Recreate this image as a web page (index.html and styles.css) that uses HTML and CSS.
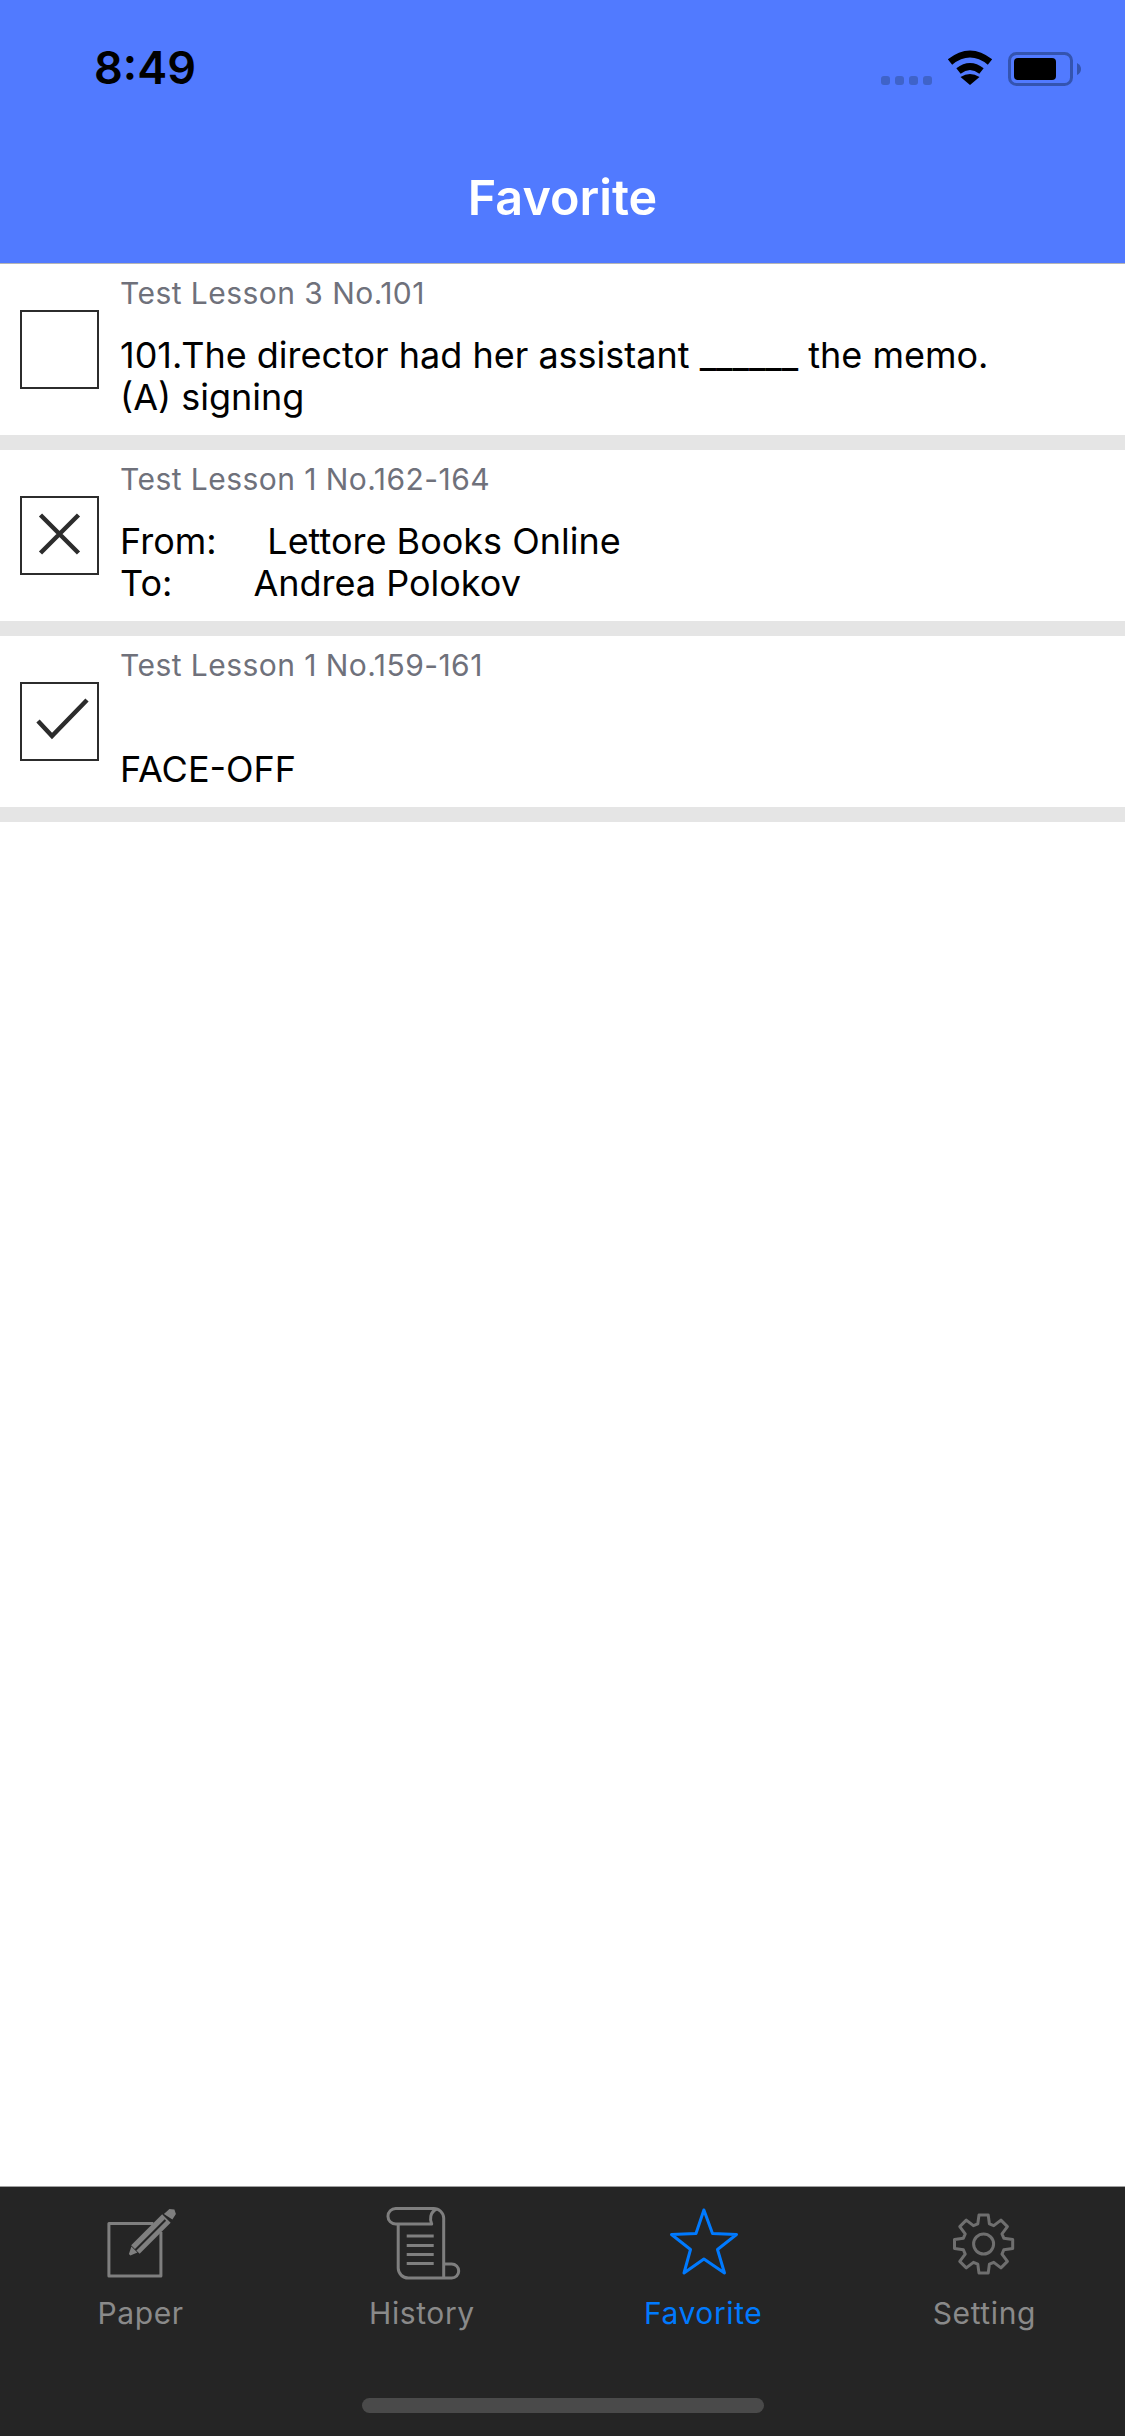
FILE: index.html
```html
<!DOCTYPE html>
<html lang="en">
<head>
<meta charset="utf-8">
<title>Favorite</title>
<link rel="stylesheet" href="styles.css">
</head>
<body>
<div class="app">
  <header class="header">
    <div class="status">
      <span class="time">8:49</span>
      <svg class="status-icons" viewBox="875 45 215 50" width="215" height="50">
        <g class="dots"><rect x="881" y="76" width="9" height="9" rx="3"/><rect x="895" y="76" width="9" height="9" rx="3"/><rect x="909" y="76" width="9" height="9" rx="3"/><rect x="923" y="76" width="9" height="9" rx="3"/></g>
        <path class="wifi-arc" d="M950 62Q970 46 990 62"/>
        <path class="wifi-arc" d="M958.500 71Q970 62 981.500 71"/>
        <path class="wifi-fill" d="M970 85L960.500 77Q970 71 979.500 77Z"/>
        <rect class="batt-frame" x="1009.500" y="53.500" width="62" height="31" rx="7"/>
        <rect class="batt-fill" x="1014" y="58" width="42" height="22" rx="4"/>
        <path class="batt-nub" d="M1077 63Q1081 65 1081 69Q1081 73 1077 75Z"/>
      </svg>
    </div>
    <h1 class="title">Favorite</h1>
  </header>

  <main class="list">
    <article class="row">
      <div class="check"></div>
      <div class="row-text">
        <div class="lesson">Test Lesson 3 No.101</div>
        <div class="body">101.The director had her assistant ______ the memo.
(A) signing</div>
      </div>
    </article>
    <article class="row">
      <div class="check">
        <svg viewBox="0 0 75 75" width="75" height="75"><path class="mark" d="M18.500 17L56.500 55M56.500 17L18.500 55"/></svg>
      </div>
      <div class="row-text">
        <div class="lesson">Test Lesson 1 No.162-164</div>
        <div class="body">From:     Lettore Books Online
To:        Andrea Polokov</div>
      </div>
    </article>
    <article class="row">
      <div class="check">
        <svg viewBox="0 0 75 75" width="75" height="75"><path class="mark" d="M16 37L30 52L65 16"/></svg>
      </div>
      <div class="row-text">
        <div class="lesson">Test Lesson 1 No.159-161</div>
        <div class="body">
FACE-OFF</div>
      </div>
    </article>
  </main>

  <nav class="tabbar">
    <div class="tabs">
      <div class="tab">
        <svg class="tab-icon" viewBox="95.600 2204 90 84" width="90" height="84">
          <path class="line" d="M153 2223.500H108.500V2276H160.500V2232"/>
          <path class="pencil" d="M135 2249.500L166 2218.500"/>
          <path class="pencil-core" d="M135 2250L165 2220"/>
          <path class="solid" d="M128.500 2254L131 2246.500L137 2252.500L130 2255.500ZM163.500 2214L169 2209L174 2209.500L175.500 2214L172 2219.500Z"/>
        </svg>
        <span class="tab-label">Paper</span>
      </div>
      <div class="tab">
        <svg class="tab-icon" viewBox="376.300 2204 90 84" width="90" height="84">
          <path class="line" d="M397.500 2224V2268A10 10 0 0 0 407.500 2278H451A7 7 0 0 0 451 2264H443V2278M443 2264V2218A10 10 0 0 0 433 2208.500H395A7.500 7.500 0 0 0 395 2224H431C429 2220 429 2212 436 2209"/>
          <path class="line" d="M406 2236H433M406 2245.500H433M406 2254.500H433M406 2263.500H433"/>
        </svg>
        <span class="tab-label">History</span>
      </div>
      <div class="tab active">
        <svg class="tab-icon" viewBox="657.500 2204 90 84" width="90" height="84">
          <path class="line" d="M703.400 2210L695.500 2233.500L671 2234.500L690 2249.500L683.500 2273L703.400 2259L724 2273L717 2249.500L736 2234.500L712 2233.500Z"/>
        </svg>
        <span class="tab-label">Favorite</span>
      </div>
      <div class="tab">
        <svg class="tab-icon" viewBox="938.400 2204 90 84" width="90" height="84">
          <g transform="translate(983 2244)">
            <path class="gear" d="M-5.800 -20.200L-4.600 -29.100L4.600 -29.100L5.800 -20.200L10.180 -18.380L17.330 -23.830L23.830 -17.330L18.380 -10.180L20.200 -5.800L29.100 -4.600L29.100 4.600L20.200 5.800L18.380 10.180L23.830 17.330L17.330 23.830L10.180 18.380L5.800 20.200L4.600 29.100L-4.600 29.100L-5.800 20.200L-10.180 18.380L-17.330 23.830L-23.830 17.330L-18.380 10.180L-20.200 5.800L-29.100 4.600L-29.100 -4.600L-20.200 -5.800L-18.380 -10.180L-23.830 -17.330L-17.330 -23.830L-10.180 -18.380Z"/>
            <circle class="gear" r="10"/>
          </g>
        </svg>
        <span class="tab-label">Setting</span>
      </div>
    </div>
    <div class="home-indicator"></div>
  </nav>
</div>
</body>
</html>
```

FILE: styles.css
```css
* { box-sizing: border-box; }
html, body { margin: 0; padding: 0; }
body { background: #fff; font-family: Inter, "Liberation Sans", sans-serif; }

.app {
  width: 1125px;
  height: 2436px;
  display: flex;
  flex-direction: column;
  overflow: hidden;
}

.header {
  height: 264px;
  background: #517aff;
  border-bottom: 1px solid #b5b5b5;
  display: flex;
  flex-direction: column;
}
.status {
  height: 168px;
  display: flex;
  align-items: flex-start;
  justify-content: space-between;
  padding: 45px 35px 0 94px;
}
.time {
  font-size: 45px;
  font-weight: 600;
  line-height: 46px;
  color: #000;
}
.status-icons { display: block; }
.dots { fill: #3f63c9; }
.wifi-arc { fill: none; stroke: #000; stroke-width: 7; }
.wifi-fill { fill: #000; }
.batt-frame { fill: none; stroke: #3454b0; stroke-width: 3; }
.batt-fill { fill: #000; }
.batt-nub { fill: #3454b0; }

.title {
  margin: 0;
  text-align: center;
  font-size: 48.500px;
  font-weight: 600;
  line-height: 60px;
  color: #fff;
}

.list { flex: 1; }

.row {
  height: 186px;
  border-bottom: 15px solid #e5e5e5;
  padding-left: 20px;
  display: flex;
  align-items: center;
  gap: 21px;
}
.check {
  width: 79px;
  height: 79px;
  border: 2px solid #2c2c2c;
  flex: none;
}
.check svg { display: block; }
.mark { fill: none; stroke: #2c2c2c; stroke-width: 4.500; }

.row-text {
  align-self: flex-start;
  padding-top: 11px;
}
.lesson {
  font-size: 30px;
  line-height: 36px;
  letter-spacing: 0.45px;
  color: #6f717b;
}
.body {
  margin-top: 23px;
  min-height: 84px;
  font-size: 36px;
  line-height: 42px;
  color: #000;
  white-space: pre-wrap;
}

.tabbar {
  height: 250px;
  background: #252525;
  border-top: 1px solid #a0a0a0;
  display: flex;
  flex-direction: column;
  align-items: center;
}
.tabs {
  width: 100%;
  display: flex;
  padding-top: 17px;
}
.tab {
  flex: 1;
  display: flex;
  flex-direction: column;
  align-items: center;
  color: #8a8a8a;
}
.tab-icon { display: block; }
.line { fill: none; stroke: #7f7f7f; stroke-width: 3; stroke-linejoin: round; }
.pencil { fill: none; stroke: #7f7f7f; stroke-width: 12; }
.pencil-core { fill: none; stroke: #252525; stroke-width: 2; }
.solid { fill: #7f7f7f; }
.gear { fill: none; stroke: #6f6f6f; stroke-width: 3; stroke-linejoin: round; }
.tab.active { color: #007aff; }
.tab.active .line { stroke: #007aff; }
.tab-label {
  margin-top: 7px;
  font-size: 30px;
  line-height: 36px;
  letter-spacing: 0.6px;
}
.home-indicator {
  width: 402px;
  height: 15px;
  margin-top: 67px;
  border-radius: 8px;
  background: #4a4a4a;
}
```
